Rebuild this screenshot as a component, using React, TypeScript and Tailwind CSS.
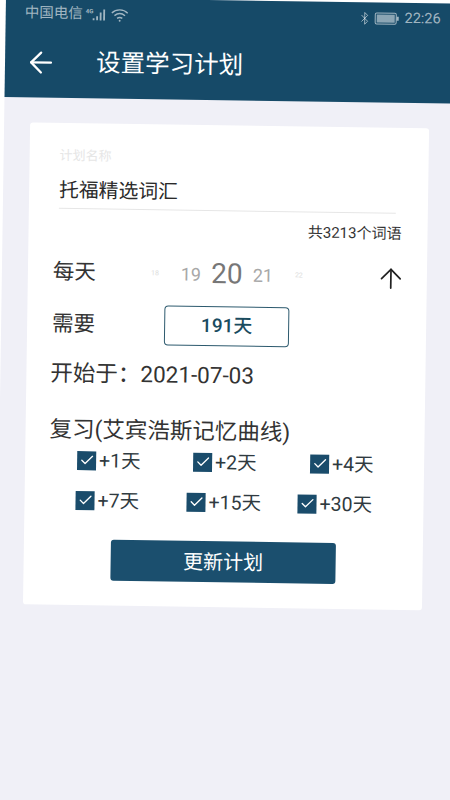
import React from 'react';
import { ArrowLeft, ArrowUp, Bluetooth, Check } from 'lucide-react';

const FONT = "font-['Roboto','Noto_Sans_CJK_SC',sans-serif]";

const ReviewItem: React.FC<{ label: string }> = ({ label }) => (
  <div className="flex items-center gap-[3px]">
    <span className="flex h-[19px] w-[19px] items-center justify-center bg-[#1a4c6b]">
      <Check size={16} strokeWidth={2} className="text-white" />
    </span>
    <span className="mt-[2px] text-[19.5px] leading-[24px] text-[#2f3a40]">{label}</span>
  </div>
);

const StatusBar = () => (
  <div className="flex h-[32px] items-center justify-between pl-[19px] pr-[35px] text-white/60">
    <div className="flex items-center">
      <span className="text-[14.5px]">中国电信</span>
      <span className="ml-[3px] -mt-[8px] text-[6px] font-bold">4G</span>
      <svg width="15" height="13" viewBox="0 0 15 13" className="-ml-[2px]" fill="currentColor">
        <rect x="1" y="10" width="1.8" height="2" />
        <rect x="4.5" y="8" width="1.8" height="4" />
        <rect x="8" y="4" width="1.8" height="8" />
        <rect x="11.5" y="1" width="1.8" height="11" />
      </svg>
      <svg width="18" height="15" viewBox="0 0 17 14" className="ml-[4px]" fill="none" stroke="currentColor" strokeWidth="1.3">
        <path d="M1 5 C5 1 12 1 16 5" />
        <path d="M3.5 7.5 C6.5 5 10.5 5 13.5 7.5" />
        <path d="M6 10 C7.5 9 9.5 9 11 10" />
        <circle cx="8.5" cy="12.3" r="0.9" fill="currentColor" stroke="none" />
      </svg>
    </div>
    <div className="flex items-center">
      <Bluetooth size={14} strokeWidth={1.6} />
      <span className="ml-[3px] flex h-[12px] w-[22px] items-center rounded-[2px] border border-white/60 p-[1px]">
        <span className="h-full w-full bg-white/50" />
      </span>
      <span className="h-[4px] w-[1.5px] bg-white/60" />
      <span className="ml-[6px] text-[14.5px]">22:26</span>
    </div>
  </div>
);

export default function App() {
  return (
    <div className={`h-[800px] w-[450px] overflow-hidden bg-white ${FONT}`}>
      <div className="ml-[6px] -mt-[3px] h-[840px] w-[470px] origin-top-left rotate-[0.85deg] bg-[#f0f0f7]">
        <header className="h-[100px] bg-[#164a68]">
          <StatusBar />
          <div className="mt-[16px] flex h-[34px] items-center pl-[19px] text-white">
            <ArrowLeft size={34} strokeWidth={1.6} />
            <h1 className="ml-[38px] text-[24.5px] leading-[34px]">设置学习计划</h1>
          </div>
        </header>

        <main className="ml-[26px] mt-[25px] h-[482px] w-[399px] rounded-[3px] bg-white pt-[24px]">
          <div className="pl-[30px] text-[13px] leading-[18px] text-[#e6e6e6]">计划名称</div>
          <div className="ml-[30px] mt-[12px] w-[337px] border-b border-[#e6e6e6] pb-[3px] text-[19.8px] leading-[28px] text-[#2a2a2a]">
            托福精选词汇
          </div>
          <div className="mt-[10px] pr-[26px] text-right text-[15px] leading-[20px] text-[#333333]">共3213个词语</div>

          <div className="mt-[18px] flex h-[30px] items-center pl-[25px]">
            <span className="w-[84px] text-[21.5px] text-[#333333]">每天</span>
            <span className="w-[36px] text-center text-[7px] text-[#dcdcdc]">18</span>
            <span className="w-[36px] text-center text-[18px] text-[#a8a8a8]">19</span>
            <span className="w-[36px] text-center text-[28px] text-[#777777]">20</span>
            <span className="w-[36px] text-center text-[18px] text-[#a8a8a8]">21</span>
            <span className="w-[36px] text-center text-[7px] text-[#dcdcdc]">22</span>
            <ArrowUp size={32} strokeWidth={1.3} className="ml-[58px] mt-[4px] shrink-0 text-[#222222]" />
          </div>

          <div className="mt-[17px] flex items-center pl-[25px]">
            <span className="w-[112px] text-[21.5px] text-[#333333]">需要</span>
            <div className="flex h-[40px] w-[125px] items-center justify-center rounded-[4px] border border-[#2d5a6e] text-[19px] font-medium text-[#1a4c5f]">
              191天
            </div>
          </div>

          <div className="mt-[13px] pl-[24px] text-[22.5px] leading-[32px] text-[#333333]">开始于：2021-07-03</div>

          <div className="mt-[24px] pl-[24px] text-[22.5px] leading-[32px] text-[#333333]">复习(艾宾浩斯记忆曲线)</div>

          <div className="ml-[52px] mt-[2px] grid grid-cols-[116px_117px_1fr]">
            <ReviewItem label="+1天" />
            <ReviewItem label="+2天" />
            <ReviewItem label="+4天" />
          </div>
          <div className="ml-[51px] mt-[14px] grid grid-cols-[111px_111px_1fr]">
            <ReviewItem label="+7天" />
            <ReviewItem label="+15天" />
            <ReviewItem label="+30天" />
          </div>

          <button className="mx-auto mt-[26px] flex h-[41px] w-[225px] items-center justify-center rounded-[3px] bg-[#1b4f6e] text-[20px] text-white">
            更新计划
          </button>
        </main>
      </div>
    </div>
  );
}
